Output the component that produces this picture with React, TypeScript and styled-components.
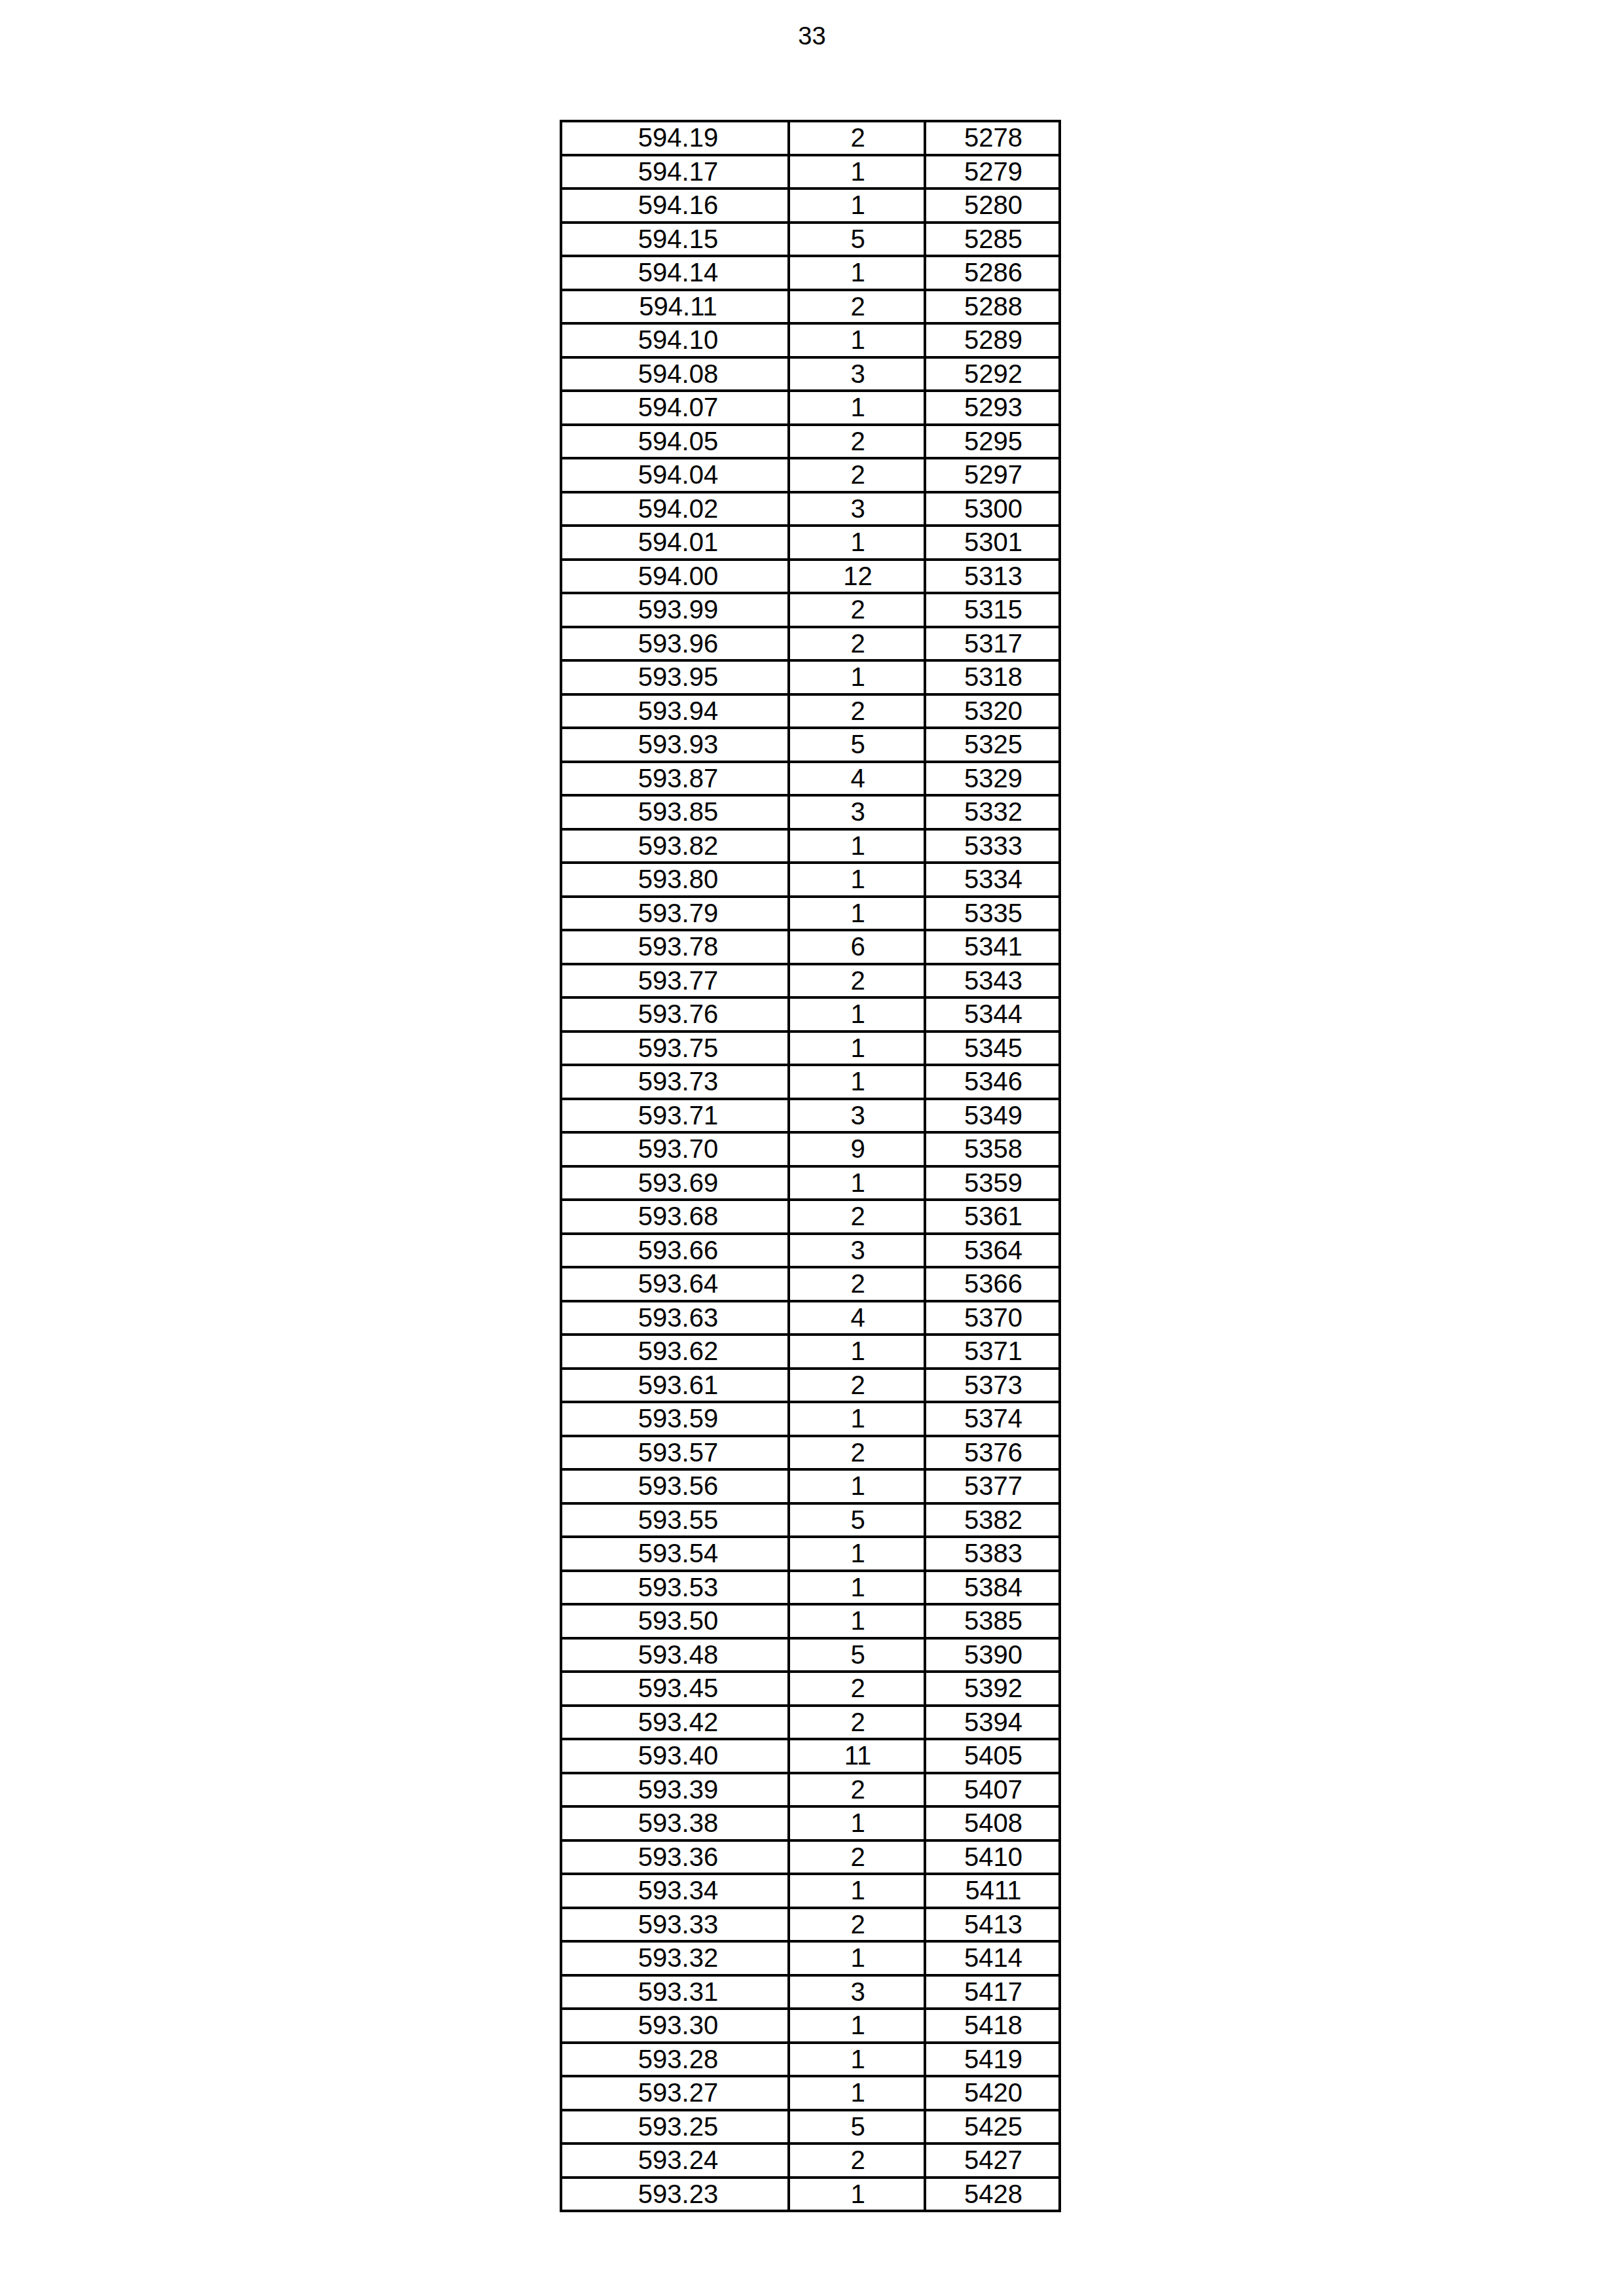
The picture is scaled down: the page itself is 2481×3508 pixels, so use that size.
import React from 'react'
import styled, { createGlobalStyle } from 'styled-components'

const GlobalStyle = createGlobalStyle`
  html, body {
    margin: 0;
    padding: 0;
    background: #ffffff;
  }
  body {
    font-family: "Liberation Sans", Arial, sans-serif;
    color: #000000;
  }
`

const Page = styled.div`
  width: 2481px;
  min-height: 3508px;
  background: #ffffff;
`

const PageNumber = styled.div`
  padding-top: 30px;
  height: 50px;
  line-height: 50px;
  font-size: 38px;
  text-align: center;
`

const Table = styled.table`
  margin: 103px 0 0 855px;
  border-collapse: separate;
  border-spacing: 0;
  border-top: 4px solid #000;
  border-left: 4px solid #000;
  table-layout: fixed;
`

const Cell = styled.td<{ $width: number; $indent?: number }>`
  width: ${(p) => p.$width - (p.$indent ?? 0)}px;
  padding: 0 0 0 ${(p) => p.$indent ?? 0}px;
  border-right: 4px solid #000;
  border-bottom: 4px solid #000;
  font-size: 40px;
  line-height: 47.5px;
  text-align: center;
  white-space: nowrap;
`

// level, volume, running total
const rows: [string, string, string][] = [
  ['594.19', '2', '5278'],
  ['594.17', '1', '5279'],
  ['594.16', '1', '5280'],
  ['594.15', '5', '5285'],
  ['594.14', '1', '5286'],
  ['594.11', '2', '5288'],
  ['594.10', '1', '5289'],
  ['594.08', '3', '5292'],
  ['594.07', '1', '5293'],
  ['594.05', '2', '5295'],
  ['594.04', '2', '5297'],
  ['594.02', '3', '5300'],
  ['594.01', '1', '5301'],
  ['594.00', '12', '5313'],
  ['593.99', '2', '5315'],
  ['593.96', '2', '5317'],
  ['593.95', '1', '5318'],
  ['593.94', '2', '5320'],
  ['593.93', '5', '5325'],
  ['593.87', '4', '5329'],
  ['593.85', '3', '5332'],
  ['593.82', '1', '5333'],
  ['593.80', '1', '5334'],
  ['593.79', '1', '5335'],
  ['593.78', '6', '5341'],
  ['593.77', '2', '5343'],
  ['593.76', '1', '5344'],
  ['593.75', '1', '5345'],
  ['593.73', '1', '5346'],
  ['593.71', '3', '5349'],
  ['593.70', '9', '5358'],
  ['593.69', '1', '5359'],
  ['593.68', '2', '5361'],
  ['593.66', '3', '5364'],
  ['593.64', '2', '5366'],
  ['593.63', '4', '5370'],
  ['593.62', '1', '5371'],
  ['593.61', '2', '5373'],
  ['593.59', '1', '5374'],
  ['593.57', '2', '5376'],
  ['593.56', '1', '5377'],
  ['593.55', '5', '5382'],
  ['593.54', '1', '5383'],
  ['593.53', '1', '5384'],
  ['593.50', '1', '5385'],
  ['593.48', '5', '5390'],
  ['593.45', '2', '5392'],
  ['593.42', '2', '5394'],
  ['593.40', '11', '5405'],
  ['593.39', '2', '5407'],
  ['593.38', '1', '5408'],
  ['593.36', '2', '5410'],
  ['593.34', '1', '5411'],
  ['593.33', '2', '5413'],
  ['593.32', '1', '5414'],
  ['593.31', '3', '5417'],
  ['593.30', '1', '5418'],
  ['593.28', '1', '5419'],
  ['593.27', '1', '5420'],
  ['593.25', '5', '5425'],
  ['593.24', '2', '5427'],
  ['593.23', '1', '5428'],
]

const App: React.FC = () => {
  return (
    <>
      <GlobalStyle />
      <Page>
        <PageNumber>33</PageNumber>
        <Table>
          <tbody>
            {rows.map(([level, count, total]) => (
              <tr key={level}>
                <Cell $width={344} $indent={10}>{level}</Cell>
                <Cell $width={204} $indent={3}>{count}</Cell>
                <Cell $width={202} $indent={3}>{total}</Cell>
              </tr>
            ))}
          </tbody>
        </Table>
      </Page>
    </>
  )
}

export default App
